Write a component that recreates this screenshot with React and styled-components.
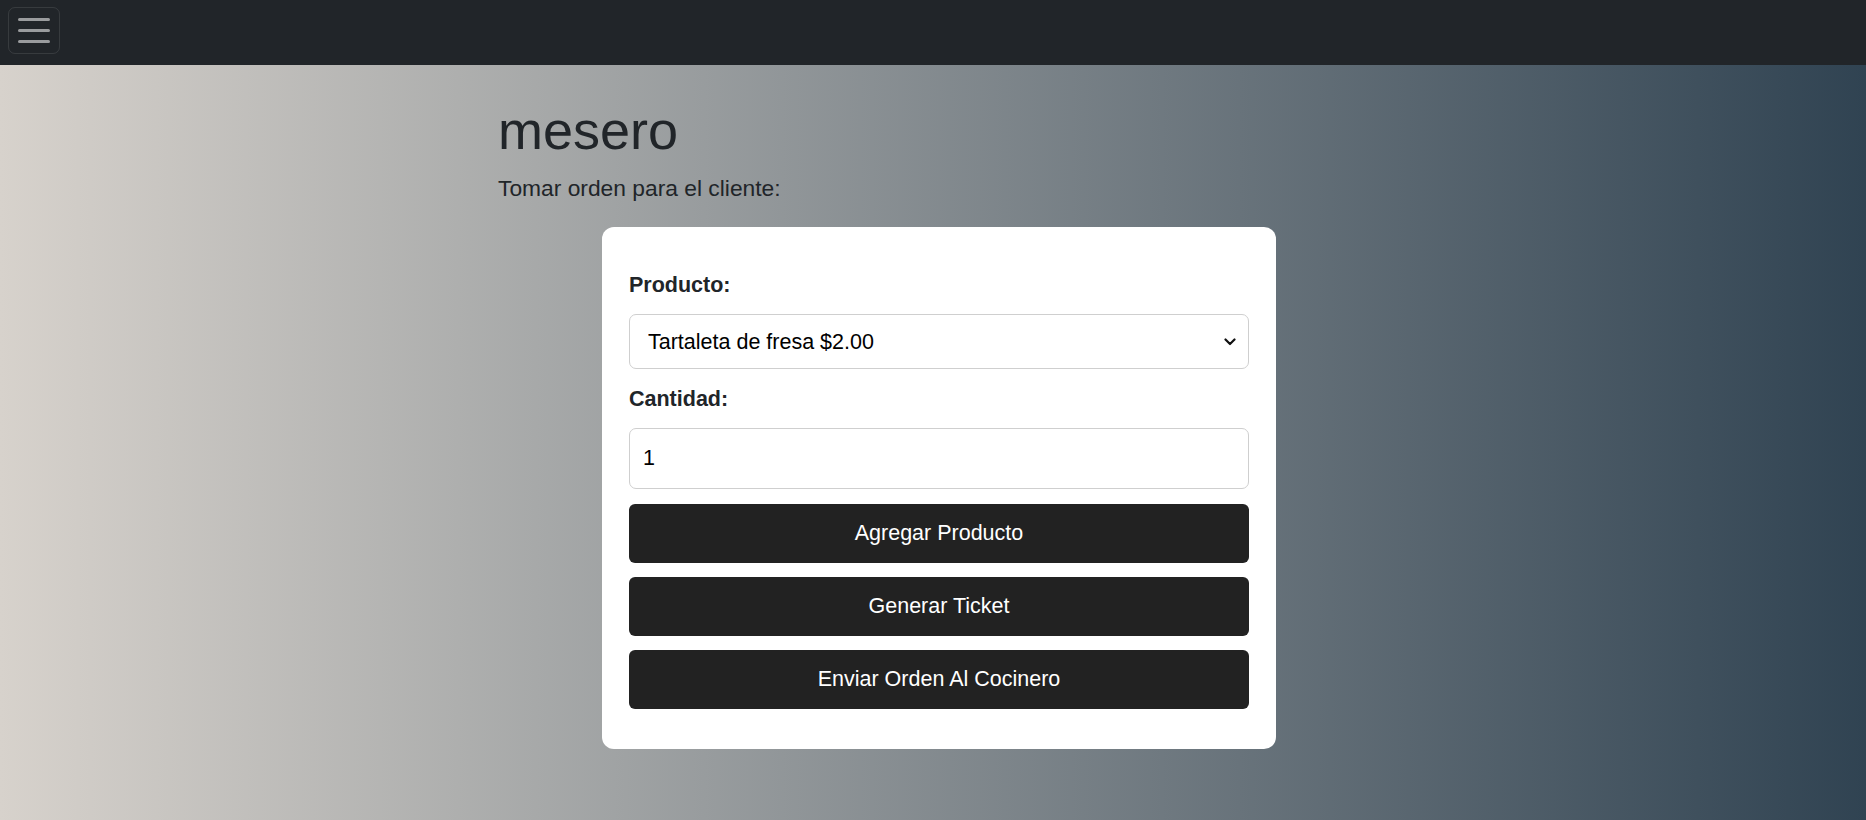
import React from "react";
import styled, { createGlobalStyle } from "styled-components";

const GlobalStyle = createGlobalStyle`
  * { box-sizing: border-box; }
  html, body { margin: 0; padding: 0; }
  body {
    font-family: "Liberation Sans", Arial, sans-serif;
    color: #212529;
    background: linear-gradient(to right, #d7d2cc, #304352);
    min-height: 100vh;
  }
`;

const Page = styled.div`
  min-height: 100vh;
  display: flex;
  flex-direction: column;
`;

const NavBar = styled.nav`
  height: 65px;
  background: #212529;
  display: flex;
  align-items: flex-start;
  padding: 7px 8px 0;
`;

const Toggler = styled.button`
  width: 52px;
  height: 47px;
  border: 1px solid rgba(255, 255, 255, 0.1);
  border-radius: 7px;
  background: transparent;
  display: flex;
  flex-direction: column;
  align-items: center;
  justify-content: center;
  gap: 8px;
  padding: 0;
  cursor: pointer;
`;

const TogglerLine = styled.span`
  display: block;
  width: 32px;
  height: 3px;
  border-radius: 1.5px;
  background: rgba(255, 255, 255, 0.55);
`;

const Main = styled.main`
  width: 870px;
  margin: 0 auto;
  padding-top: 33px;
  padding-bottom: 40px;
`;

const Title = styled.h1`
  font-size: 54px;
  font-weight: 400;
  line-height: 1.2;
  margin: 0 0 8px;
  color: #212529;
`;

const Lead = styled.p`
  font-size: 22.8px;
  line-height: 1.5;
  margin: 0 0 22px;
  color: #212529;
`;

const Card = styled.section`
  width: 674px;
  margin-left: 104px;
  background: #fff;
  border-radius: 12px;
  padding: 42px 27px 40px;
  display: flex;
  flex-direction: column;
`;

const Label = styled.label`
  font-size: 21.5px;
  font-weight: 700;
  line-height: 1.5;
  margin-bottom: 13px;
  color: #212529;
`;

const SelectWrap = styled.div`
  position: relative;
  margin-bottom: 14px;
`;

const Select = styled.select`
  appearance: none;
  -webkit-appearance: none;
  width: 100%;
  height: 55px;
  border: 1px solid #cfcfcf;
  border-radius: 7px;
  background: #fff;
  padding: 0 40px 0 18px;
  font-family: "Liberation Sans", Arial, sans-serif;
  font-size: 21.5px;
  color: #000;
  outline: none;
`;

const Chevron = styled.svg`
  position: absolute;
  right: 13px;
  top: 50%;
  transform: translateY(-50%);
  pointer-events: none;
`;

const Input = styled.input`
  width: 100%;
  height: 61px;
  border: 1px solid #cfcfcf;
  border-radius: 7px;
  background: #fff;
  padding: 0 13px;
  font-family: "Liberation Sans", Arial, sans-serif;
  font-size: 21.5px;
  color: #000;
  outline: none;
  margin-bottom: 15px;
`;

const Actions = styled.div`
  display: flex;
  flex-direction: column;
  gap: 14px;
`;

const Button = styled.button`
  width: 100%;
  height: 59px;
  border: none;
  border-radius: 6px;
  background: #222;
  color: #fff;
  font-family: "Liberation Sans", Arial, sans-serif;
  font-size: 21.5px;
  cursor: pointer;
`;

export default function App() {
  return (
    <>
      <GlobalStyle />
      <Page>
        <NavBar>
          <Toggler aria-label="Menu">
            <TogglerLine />
            <TogglerLine />
            <TogglerLine />
          </Toggler>
        </NavBar>
        <Main>
          <Title>mesero</Title>
          <Lead>Tomar orden para el cliente:</Lead>
          <Card>
            <Label htmlFor="producto">Producto:</Label>
            <SelectWrap>
              <Select id="producto" defaultValue="tartaleta">
                <option value="tartaleta">Tartaleta de fresa $2.00</option>
              </Select>
              <Chevron width="12" height="8" viewBox="0 0 12 8">
                <path d="M1.5 1.5 L6 6 L10.5 1.5" fill="none" stroke="#111" strokeWidth="2.2" strokeLinecap="round" strokeLinejoin="round" />
              </Chevron>
            </SelectWrap>
            <Label htmlFor="cantidad">Cantidad:</Label>
            <Input id="cantidad" type="text" defaultValue="1" />
            <Actions>
              <Button>Agregar Producto</Button>
              <Button>Generar Ticket</Button>
              <Button>Enviar Orden Al Cocinero</Button>
            </Actions>
          </Card>
        </Main>
      </Page>
    </>
  );
}
